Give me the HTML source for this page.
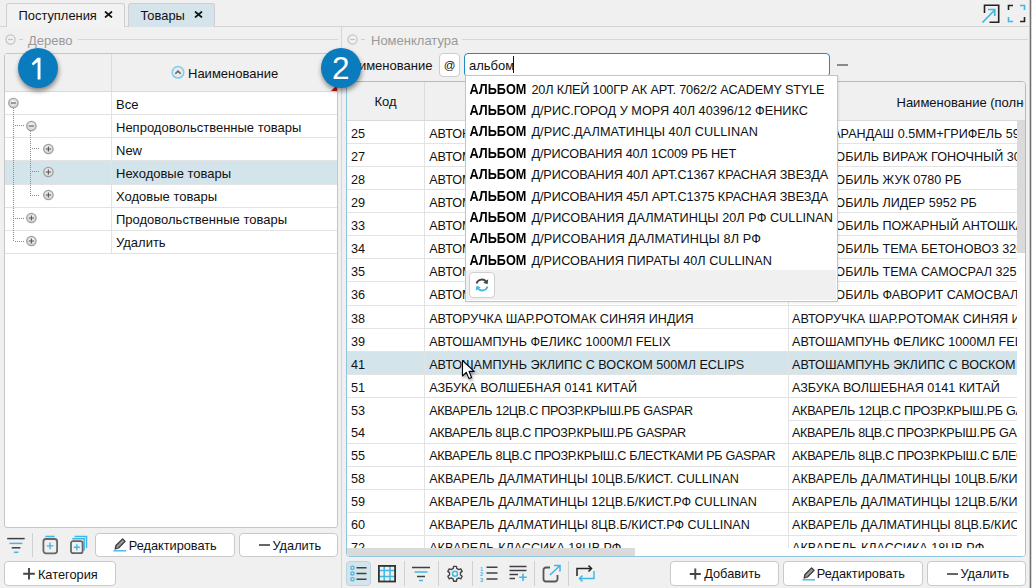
<!DOCTYPE html><html><head><meta charset="utf-8"><style>
html,body{margin:0;padding:0;}
body{width:1032px;height:588px;overflow:hidden;position:relative;background:#f0f0f0;font-family:"Liberation Sans",sans-serif;}
.t{position:absolute;line-height:1;white-space:nowrap;}
.b{position:absolute;box-sizing:border-box;}
.clip{position:absolute;overflow:hidden;}
</style></head><body>
<div class="b" style="left:0px;top:26px;width:1032px;height:1px;background:#d4d4d4;"></div>
<div class="b" style="left:6px;top:3px;width:119px;height:24px;border:1px solid #cfcfcf;border-bottom:none;border-radius:3px 3px 0 0;background:#f2f2f2;"></div>
<div class="t" style="left:18.5px;top:9.88px;font-size:12.9px;color:#111;font-weight:normal;">Поступления</div>
<svg class="b" style="left:104px;top:11px;" width="9" height="7" viewBox="0 0 9 7"><path d="M1 0.5L8 6.5M8 0.5L1 6.5" stroke="#111" stroke-width="1.7"/></svg>
<div class="b" style="left:128px;top:3px;width:87px;height:24px;border:1px solid #cfcfcf;border-bottom:none;border-radius:3px 3px 0 0;background:#d4e4ea;"></div>
<div class="t" style="left:140.5px;top:9.88px;font-size:12.9px;color:#111;font-weight:normal;">Товары</div>
<svg class="b" style="left:194px;top:11px;" width="9" height="7" viewBox="0 0 9 7"><path d="M1 0.5L8 6.5M8 0.5L1 6.5" stroke="#111" stroke-width="1.7"/></svg>
<svg class="b" style="left:980px;top:3px;" width="22" height="22" viewBox="0 0 22 22"><path d="M4.5 10V2.3H18.7V19.2H9.5" fill="none" stroke="#222" stroke-width="1.6"/><path d="M2.5 19.5L14.6 7.2M8 6.5H14.8V13" fill="none" stroke="#3fb8e8" stroke-width="1.7"/></svg>
<svg class="b" style="left:1007px;top:4px;" width="20" height="20" viewBox="0 0 20 20"><path d="M1.5 6V1.5H6" fill="none" stroke="#222" stroke-width="1.6"/><path d="M13 1.5H17.5V6" fill="none" stroke="#3fb8e8" stroke-width="1.6"/><path d="M1.5 13V17.5H6" fill="none" stroke="#3fb8e8" stroke-width="1.6"/><path d="M13 17.5H17.5V13" fill="none" stroke="#222" stroke-width="1.6"/></svg>
<div class="b" style="left:1029px;top:0px;width:1px;height:588px;background:#c8c8c8;"></div>
<div class="b" style="left:1030px;top:0px;width:1px;height:588px;background:#707070;"></div>
<div class="b" style="left:1031px;top:0px;width:1px;height:588px;background:#d8d8d8;"></div>
<svg class="b" style="left:4.5px;top:34px;" width="12" height="12" viewBox="0 0 12 12"><circle cx="5.5" cy="5.5" r="4.6" fill="none" stroke="#c4c4c4" stroke-width="1.2"/><path d="M3 5.5H8" stroke="#c4c4c4" stroke-width="1.2"/></svg>
<div class="b" style="left:18.5px;top:39px;width:4.0px;height:1px;background:#d0d0d0;"></div>
<div class="t" style="left:28px;top:33.80px;font-size:13px;color:#9a9a9a;font-weight:normal;">Дерево</div>
<div class="b" style="left:78px;top:39px;width:260px;height:1px;background:#d6d6d6;"></div>
<div class="b" style="left:341px;top:27px;width:1px;height:561px;background:#d6d6d6;"></div>
<div class="b" style="left:4px;top:53px;width:334px;height:475px;border:1px solid #c6c6c6;border-radius:3px;background:#fff;"></div>
<div class="b" style="left:5px;top:54px;width:332px;height:37px;background:#f0f0f0;"></div>
<div class="b" style="left:5px;top:91px;width:332px;height:1px;background:#d8d8d8;"></div>
<div class="b" style="left:111px;top:54px;width:1px;height:37px;background:#dcdcdc;"></div>
<svg class="b" style="left:171px;top:65px;" width="15" height="15" viewBox="0 0 15 15"><circle cx="7" cy="7.3" r="5.8" fill="#eaeaea" stroke="#7fcdef" stroke-width="1.5"/><path d="M4.3 8.8L7 6.1L9.7 8.8" fill="none" stroke="#666" stroke-width="1.6"/></svg>
<div class="t" style="left:188px;top:67.00px;font-size:13px;color:#111;font-weight:normal;">Наименование</div>
<svg class="b" style="left:331px;top:85px;" width="6" height="6" viewBox="0 0 6 6"><path d="M6 0V6H0Z" fill="#cc1111"/></svg>
<div class="b" style="left:5px;top:114px;width:332px;height:1px;background:#e3e3e3;"></div>
<div class="t" style="left:116px;top:98.10px;font-size:13px;color:#111;font-weight:normal;">Все</div>
<div class="b" style="left:5px;top:137px;width:332px;height:1px;background:#e3e3e3;"></div>
<div class="t" style="left:116px;top:121.10px;font-size:13px;color:#111;font-weight:normal;">Непродовольственные товары</div>
<div class="b" style="left:5px;top:160px;width:332px;height:1px;background:#e3e3e3;"></div>
<div class="t" style="left:116px;top:144.10px;font-size:13px;color:#111;font-weight:normal;">New</div>
<div class="b" style="left:5px;top:161px;width:332px;height:23px;background:#d3e4ea;"></div>
<div class="b" style="left:5px;top:184px;width:332px;height:1px;background:#e3e3e3;"></div>
<div class="t" style="left:116px;top:167.10px;font-size:13px;color:#111;font-weight:normal;">Неходовые товары</div>
<div class="b" style="left:5px;top:207px;width:332px;height:1px;background:#e3e3e3;"></div>
<div class="t" style="left:116px;top:190.10px;font-size:13px;color:#111;font-weight:normal;">Ходовые товары</div>
<div class="b" style="left:5px;top:230px;width:332px;height:1px;background:#e3e3e3;"></div>
<div class="t" style="left:116px;top:213.10px;font-size:13px;color:#111;font-weight:normal;">Продовольственные товары</div>
<div class="b" style="left:5px;top:253px;width:332px;height:1px;background:#e3e3e3;"></div>
<div class="t" style="left:116px;top:236.10px;font-size:13px;color:#111;font-weight:normal;">Удалить</div>
<div class="b" style="left:111px;top:92px;width:1px;height:161px;background:#e3e3e3;"></div>
<div class="b" style="left:13px;top:108px;width:1px;height:134px;background:repeating-linear-gradient(to bottom,#8a8a8a 0 1px,transparent 1px 2px);"></div>
<div class="b" style="left:15px;top:125px;width:9px;height:1px;background:repeating-linear-gradient(to right,#8a8a8a 0 1px,transparent 1px 2px);"></div>
<div class="b" style="left:30px;top:131px;width:1px;height:65px;background:repeating-linear-gradient(to bottom,#8a8a8a 0 1px,transparent 1px 2px);"></div>
<div class="b" style="left:32px;top:148px;width:8px;height:1px;background:repeating-linear-gradient(to right,#8a8a8a 0 1px,transparent 1px 2px);"></div>
<div class="b" style="left:32px;top:171px;width:8px;height:1px;background:repeating-linear-gradient(to right,#8a8a8a 0 1px,transparent 1px 2px);"></div>
<div class="b" style="left:32px;top:195px;width:8px;height:1px;background:repeating-linear-gradient(to right,#8a8a8a 0 1px,transparent 1px 2px);"></div>
<div class="b" style="left:15px;top:218px;width:9px;height:1px;background:repeating-linear-gradient(to right,#8a8a8a 0 1px,transparent 1px 2px);"></div>
<div class="b" style="left:15px;top:241px;width:9px;height:1px;background:repeating-linear-gradient(to right,#8a8a8a 0 1px,transparent 1px 2px);"></div>
<svg class="b" style="left:7px;top:97px;" width="12" height="12" viewBox="0 0 12 12"><defs><radialGradient id="g13103" cx="50%" cy="40%" r="60%"><stop offset="0" stop-color="#f4f4f4"/><stop offset="1" stop-color="#cfcfcf"/></radialGradient></defs><circle cx="6.4" cy="6" r="4.7" fill="url(#g13103)" stroke="#a0a0a0" stroke-width="1.3"/><path d="M3.9 6H8.9" stroke="#5a5a5a" stroke-width="1.1"/></svg>
<svg class="b" style="left:24.5px;top:120px;" width="12" height="12" viewBox="0 0 12 12"><defs><radialGradient id="g30126" cx="50%" cy="40%" r="60%"><stop offset="0" stop-color="#f4f4f4"/><stop offset="1" stop-color="#cfcfcf"/></radialGradient></defs><circle cx="6.4" cy="6" r="4.7" fill="url(#g30126)" stroke="#a0a0a0" stroke-width="1.3"/><path d="M3.9 6H8.9" stroke="#5a5a5a" stroke-width="1.1"/></svg>
<svg class="b" style="left:42px;top:143px;" width="12" height="12" viewBox="0 0 12 12"><defs><radialGradient id="g48149" cx="50%" cy="40%" r="60%"><stop offset="0" stop-color="#f4f4f4"/><stop offset="1" stop-color="#cfcfcf"/></radialGradient></defs><circle cx="6.4" cy="6" r="4.7" fill="url(#g48149)" stroke="#a0a0a0" stroke-width="1.3"/><path d="M3.9 6H8.9" stroke="#5a5a5a" stroke-width="1.1"/><path d="M6.4 3.5V8.5" stroke="#5a5a5a" stroke-width="1.1"/></svg>
<svg class="b" style="left:42px;top:166px;" width="12" height="12" viewBox="0 0 12 12"><defs><radialGradient id="g48172" cx="50%" cy="40%" r="60%"><stop offset="0" stop-color="#f4f4f4"/><stop offset="1" stop-color="#cfcfcf"/></radialGradient></defs><circle cx="6.4" cy="6" r="4.7" fill="url(#g48172)" stroke="#a0a0a0" stroke-width="1.3"/><path d="M3.9 6H8.9" stroke="#5a5a5a" stroke-width="1.1"/><path d="M6.4 3.5V8.5" stroke="#5a5a5a" stroke-width="1.1"/></svg>
<svg class="b" style="left:42px;top:189px;" width="12" height="12" viewBox="0 0 12 12"><defs><radialGradient id="g48195" cx="50%" cy="40%" r="60%"><stop offset="0" stop-color="#f4f4f4"/><stop offset="1" stop-color="#cfcfcf"/></radialGradient></defs><circle cx="6.4" cy="6" r="4.7" fill="url(#g48195)" stroke="#a0a0a0" stroke-width="1.3"/><path d="M3.9 6H8.9" stroke="#5a5a5a" stroke-width="1.1"/><path d="M6.4 3.5V8.5" stroke="#5a5a5a" stroke-width="1.1"/></svg>
<svg class="b" style="left:24.5px;top:212px;" width="12" height="12" viewBox="0 0 12 12"><defs><radialGradient id="g30218" cx="50%" cy="40%" r="60%"><stop offset="0" stop-color="#f4f4f4"/><stop offset="1" stop-color="#cfcfcf"/></radialGradient></defs><circle cx="6.4" cy="6" r="4.7" fill="url(#g30218)" stroke="#a0a0a0" stroke-width="1.3"/><path d="M3.9 6H8.9" stroke="#5a5a5a" stroke-width="1.1"/><path d="M6.4 3.5V8.5" stroke="#5a5a5a" stroke-width="1.1"/></svg>
<svg class="b" style="left:24.5px;top:235px;" width="12" height="12" viewBox="0 0 12 12"><defs><radialGradient id="g30241" cx="50%" cy="40%" r="60%"><stop offset="0" stop-color="#f4f4f4"/><stop offset="1" stop-color="#cfcfcf"/></radialGradient></defs><circle cx="6.4" cy="6" r="4.7" fill="url(#g30241)" stroke="#a0a0a0" stroke-width="1.3"/><path d="M3.9 6H8.9" stroke="#5a5a5a" stroke-width="1.1"/><path d="M6.4 3.5V8.5" stroke="#5a5a5a" stroke-width="1.1"/></svg>
<svg class="b" style="left:6px;top:536px;" width="20" height="18" viewBox="0 0 20 18"><path d="M1.2 2.6H18.7" stroke="#404040" stroke-width="1.5"/><path d="M3.5 7.4H16.4" stroke="#3fb8e8" stroke-width="1.5"/><path d="M5.7 11.8H14.4" stroke="#404040" stroke-width="1.5"/><path d="M7.9 16.3H12.4" stroke="#3fb8e8" stroke-width="1.5"/></svg>
<div class="b" style="left:32px;top:533px;width:1px;height:24px;background:#d0d0d0;"></div>
<svg class="b" style="left:41px;top:534px;" width="18" height="21" viewBox="0 0 18 21"><path d="M4.3 2.5H13.6" stroke="#3fb8e8" stroke-width="1.6"/><rect x="2.4" y="5" width="13.7" height="14.3" rx="2.5" fill="none" stroke="#666" stroke-width="1.8"/><path d="M9 8.6V15.2M5.7 11.9H12.3" stroke="#3fb8e8" stroke-width="1.4"/></svg>
<svg class="b" style="left:68px;top:534px;" width="22" height="21" viewBox="0 0 22 21"><path d="M6.5 2.5H18.5V14" fill="none" stroke="#3fb8e8" stroke-width="1.5"/><path d="M4.3 4.7H16.2V16.5" fill="none" stroke="#3fb8e8" stroke-width="1.5"/><rect x="3" y="7.2" width="11.6" height="12" rx="2" fill="#f0f0f0" stroke="#666" stroke-width="1.8"/><path d="M8.8 10.2V16.2M5.8 13.2H11.8" stroke="#3fb8e8" stroke-width="1.4"/></svg>
<div class="b" style="left:95px;top:533px;width:140px;height:24px;border:1px solid #c9c9c9;border-radius:4px;background:#fff;"></div>
<svg class="b" style="left:113px;top:537px;" width="14" height="15" viewBox="0 0 14 15"><path d="M2.2 12L3 8.5L9.6 1.9L12.1 4.4L5.5 11Z" fill="#9a9a9a" stroke="#3a3a3a" stroke-width="1.3" stroke-linejoin="round"/><path d="M0.5 13.8H13" stroke="#3fb8e8" stroke-width="1.4"/></svg>
<div class="t" style="left:128.7px;top:540.01px;font-size:12.75px;color:#111;font-weight:normal;">Редактировать</div>
<div class="b" style="left:239px;top:533px;width:99px;height:24px;border:1px solid #c9c9c9;border-radius:4px;background:#fff;"></div>
<div class="b" style="left:259px;top:544px;width:11px;height:2px;background:#666;"></div>
<div class="t" style="left:272.5px;top:540.01px;font-size:12.75px;color:#111;font-weight:normal;">Удалить</div>
<div class="b" style="left:4px;top:561px;width:112px;height:25px;border:1px solid #c9c9c9;border-radius:4px;background:#fff;"></div>
<svg class="b" style="left:22px;top:567px;" width="14" height="14" viewBox="0 0 14 14"><path d="M7 1V12.5M1.2 6.8H12.8" stroke="#444" stroke-width="1.9"/></svg>
<div class="t" style="left:37.9px;top:568.66px;font-size:12.8px;color:#111;font-weight:normal;">Категория</div>
<svg class="b" style="left:346.5px;top:34px;" width="12" height="12" viewBox="0 0 12 12"><circle cx="5.5" cy="5.5" r="4.6" fill="none" stroke="#c4c4c4" stroke-width="1.2"/><path d="M3 5.5H8" stroke="#c4c4c4" stroke-width="1.2"/></svg>
<div class="b" style="left:360.5px;top:39px;width:4.0px;height:1px;background:#d0d0d0;"></div>
<div class="t" style="left:371px;top:33.80px;font-size:13px;color:#9a9a9a;font-weight:normal;">Номенклатура</div>
<div class="b" style="left:462px;top:39px;width:566px;height:1px;background:#d6d6d6;"></div>
<div class="t" style="left:342.3px;top:58.60px;font-size:13px;color:#111;font-weight:normal;">Наименование</div>
<div class="b" style="left:439px;top:53px;width:21px;height:24px;border:1px solid #cdcdcd;border-radius:4px;background:#fff;"></div>
<div class="t" style="left:443.8px;top:59.57px;font-size:11.5px;color:#111;font-weight:normal;">@</div>
<div class="b" style="left:464px;top:53px;width:366px;height:24px;border:1px solid #1b8cc8;border-radius:4px;background:#fff;"></div>
<div class="t" style="left:469px;top:58.90px;font-size:13px;color:#111;font-weight:normal;">альбом</div>
<div class="b" style="left:513px;top:56px;width:1px;height:17px;background:#111;"></div>
<div class="b" style="left:837px;top:63.5px;width:11px;height:2.0px;background:#8a8a8a;"></div>
<div class="b" style="left:346px;top:81px;width:680px;height:476px;border:1px solid #8fc6de;border-radius:4px;background:#fff;"></div>
<div class="b" style="left:347px;top:82px;width:678px;height:38px;background:#f0f0f0;border-radius:3px 3px 0 0;"></div>
<div class="b" style="left:347px;top:120px;width:678px;height:1px;background:#dadada;"></div>
<div class="b" style="left:424px;top:82px;width:1px;height:38px;background:#dcdcdc;"></div>
<div class="b" style="left:788px;top:82px;width:1px;height:38px;background:#dcdcdc;"></div>
<div class="t" style="left:374.5px;top:94.80px;font-size:13px;color:#111;font-weight:normal;">Код</div>
<div class="t" style="left:560px;top:95.80px;font-size:13px;color:#111;font-weight:normal;">Наименование</div>
<div class="clip" style="left:789px;top:82px;width:235px;height:38px;"><div class="t" style="left:107.5px;top:13.80px;font-size:13px;color:#111;font-weight:normal;">Наименование (полное)</div>
</div><div class="clip" style="left:347px;top:121px;width:678px;height:427px;">
<div class="b" style="left:0px;top:22px;width:670px;height:1px;background:#e3e3e3;"></div>
<div class="t" style="left:4px;top:6.95px;font-size:12.7px;color:#111;font-weight:normal;">25</div>
<div class="clip" style="left:78px;top:0px;width:363px;height:22px;"><div class="t" style="left:4.2px;top:7.03px;font-size:12.6px;color:#111;font-weight:normal;">АВТОКАРАНДАШ 0.5ММ+ГРИФЕЛЬ 5952 РБ</div>
</div>
<div class="clip" style="left:442px;top:0px;width:228px;height:22px;"><div class="t" style="left:3px;top:7.03px;font-size:12.6px;color:#111;font-weight:normal;">АВТОКАРАНДАШ 0.5ММ+ГРИФЕЛЬ 5952 РБ</div>
</div>
<div class="b" style="left:0px;top:45px;width:670px;height:1px;background:#e3e3e3;"></div>
<div class="t" style="left:4px;top:29.95px;font-size:12.7px;color:#111;font-weight:normal;">27</div>
<div class="clip" style="left:78px;top:23px;width:363px;height:22px;"><div class="t" style="left:4.2px;top:7.03px;font-size:12.6px;color:#111;font-weight:normal;">АВТОМОБИЛЬ ВИРАЖ ГОНОЧНЫЙ 3045 РБ</div>
</div>
<div class="clip" style="left:442px;top:23px;width:228px;height:22px;"><div class="t" style="left:3px;top:7.03px;font-size:12.6px;color:#111;font-weight:normal;">АВТОМОБИЛЬ ВИРАЖ ГОНОЧНЫЙ 3045 РБ</div>
</div>
<div class="b" style="left:0px;top:68px;width:670px;height:1px;background:#e3e3e3;"></div>
<div class="t" style="left:4px;top:52.95px;font-size:12.7px;color:#111;font-weight:normal;">28</div>
<div class="clip" style="left:78px;top:46px;width:363px;height:22px;"><div class="t" style="left:4.2px;top:7.03px;font-size:12.6px;color:#111;font-weight:normal;">АВТОМОБИЛЬ ЖУК 0780 РБ</div>
</div>
<div class="clip" style="left:442px;top:46px;width:228px;height:22px;"><div class="t" style="left:3px;top:7.03px;font-size:12.6px;color:#111;font-weight:normal;">АВТОМОБИЛЬ ЖУК 0780 РБ</div>
</div>
<div class="b" style="left:0px;top:91px;width:670px;height:1px;background:#e3e3e3;"></div>
<div class="t" style="left:4px;top:75.95px;font-size:12.7px;color:#111;font-weight:normal;">29</div>
<div class="clip" style="left:78px;top:69px;width:363px;height:22px;"><div class="t" style="left:4.2px;top:7.03px;font-size:12.6px;color:#111;font-weight:normal;">АВТОМОБИЛЬ ЛИДЕР 5952 РБ</div>
</div>
<div class="clip" style="left:442px;top:69px;width:228px;height:22px;"><div class="t" style="left:3px;top:7.03px;font-size:12.6px;color:#111;font-weight:normal;">АВТОМОБИЛЬ ЛИДЕР 5952 РБ</div>
</div>
<div class="b" style="left:0px;top:114px;width:670px;height:1px;background:#e3e3e3;"></div>
<div class="t" style="left:4px;top:98.95px;font-size:12.7px;color:#111;font-weight:normal;">33</div>
<div class="clip" style="left:78px;top:92px;width:363px;height:22px;"><div class="t" style="left:4.2px;top:7.03px;font-size:12.6px;color:#111;font-weight:normal;">АВТОМОБИЛЬ ПОЖАРНЫЙ АНТОШКА</div>
</div>
<div class="clip" style="left:442px;top:92px;width:228px;height:22px;"><div class="t" style="left:3px;top:7.03px;font-size:12.6px;color:#111;font-weight:normal;">АВТОМОБИЛЬ ПОЖАРНЫЙ АНТОШКА</div>
</div>
<div class="b" style="left:0px;top:137px;width:670px;height:1px;background:#e3e3e3;"></div>
<div class="t" style="left:4px;top:121.95px;font-size:12.7px;color:#111;font-weight:normal;">34</div>
<div class="clip" style="left:78px;top:115px;width:363px;height:22px;"><div class="t" style="left:4.2px;top:7.03px;font-size:12.6px;color:#111;font-weight:normal;">АВТОМОБИЛЬ ТЕМА БЕТОНОВОЗ 326</div>
</div>
<div class="clip" style="left:442px;top:115px;width:228px;height:22px;"><div class="t" style="left:3px;top:7.03px;font-size:12.6px;color:#111;font-weight:normal;">АВТОМОБИЛЬ ТЕМА БЕТОНОВОЗ 326</div>
</div>
<div class="b" style="left:0px;top:160px;width:670px;height:1px;background:#e3e3e3;"></div>
<div class="t" style="left:4px;top:144.95px;font-size:12.7px;color:#111;font-weight:normal;">35</div>
<div class="clip" style="left:78px;top:138px;width:363px;height:22px;"><div class="t" style="left:4.2px;top:7.03px;font-size:12.6px;color:#111;font-weight:normal;">АВТОМОБИЛЬ ТЕМА САМОСРАЛ 325</div>
</div>
<div class="clip" style="left:442px;top:138px;width:228px;height:22px;"><div class="t" style="left:3px;top:7.03px;font-size:12.6px;color:#111;font-weight:normal;">АВТОМОБИЛЬ ТЕМА САМОСРАЛ 325</div>
</div>
<div class="b" style="left:0px;top:184px;width:670px;height:1px;background:#e3e3e3;"></div>
<div class="t" style="left:4px;top:167.95px;font-size:12.7px;color:#111;font-weight:normal;">36</div>
<div class="clip" style="left:78px;top:161px;width:363px;height:23px;"><div class="t" style="left:4.2px;top:7.03px;font-size:12.6px;color:#111;font-weight:normal;">АВТОМОБИЛЬ ФАВОРИТ САМОСВАЛ</div>
</div>
<div class="clip" style="left:442px;top:161px;width:228px;height:23px;"><div class="t" style="left:3px;top:7.03px;font-size:12.6px;color:#111;font-weight:normal;">АВТОМОБИЛЬ ФАВОРИТ САМОСВАЛ</div>
</div>
<div class="b" style="left:0px;top:207px;width:670px;height:1px;background:#e3e3e3;"></div>
<div class="t" style="left:4px;top:191.95px;font-size:12.7px;color:#111;font-weight:normal;">38</div>
<div class="clip" style="left:78px;top:185px;width:363px;height:22px;"><div class="t" style="left:4.2px;top:7.03px;font-size:12.6px;color:#111;font-weight:normal;">АВТОРУЧКА ШАР.РОТОМАК СИНЯЯ ИНДИЯ</div>
</div>
<div class="clip" style="left:442px;top:185px;width:228px;height:22px;"><div class="t" style="left:3px;top:7.03px;font-size:12.6px;color:#111;font-weight:normal;">АВТОРУЧКА ШАР.РОТОМАК СИНЯЯ ИНДИЯ</div>
</div>
<div class="b" style="left:0px;top:230px;width:670px;height:1px;background:#e3e3e3;"></div>
<div class="t" style="left:4px;top:214.95px;font-size:12.7px;color:#111;font-weight:normal;">39</div>
<div class="clip" style="left:78px;top:208px;width:363px;height:22px;"><div class="t" style="left:4.2px;top:7.03px;font-size:12.6px;color:#111;font-weight:normal;">АВТОШАМПУНЬ ФЕЛИКС 1000МЛ FELIX</div>
</div>
<div class="clip" style="left:442px;top:208px;width:228px;height:22px;"><div class="t" style="left:3px;top:7.03px;font-size:12.6px;color:#111;font-weight:normal;">АВТОШАМПУНЬ ФЕЛИКС 1000МЛ FELIX</div>
</div>
<div class="b" style="left:0px;top:231px;width:670px;height:22px;background:#d3e4ea;"></div>
<div class="b" style="left:0px;top:253px;width:670px;height:1px;background:#e3e3e3;"></div>
<div class="t" style="left:4px;top:237.95px;font-size:12.7px;color:#111;font-weight:normal;">41</div>
<div class="clip" style="left:78px;top:231px;width:363px;height:22px;"><div class="t" style="left:4.2px;top:7.03px;font-size:12.6px;color:#111;font-weight:normal;">АВТОШАМПУНЬ ЭКЛИПС С ВОСКОМ 500МЛ ECLIPS</div>
</div>
<div class="clip" style="left:442px;top:231px;width:228px;height:22px;"><div class="t" style="left:3px;top:7.03px;font-size:12.6px;color:#111;font-weight:normal;">АВТОШАМПУНЬ ЭКЛИПС С ВОСКОМ 500МЛ ECLIPS</div>
</div>
<div class="b" style="left:0px;top:276px;width:670px;height:1px;background:#e3e3e3;"></div>
<div class="t" style="left:4px;top:260.95px;font-size:12.7px;color:#111;font-weight:normal;">51</div>
<div class="clip" style="left:78px;top:254px;width:363px;height:22px;"><div class="t" style="left:4.2px;top:7.03px;font-size:12.6px;color:#111;font-weight:normal;">АЗБУКА ВОЛШЕБНАЯ 0141 КИТАЙ</div>
</div>
<div class="clip" style="left:442px;top:254px;width:228px;height:22px;"><div class="t" style="left:3px;top:7.03px;font-size:12.6px;color:#111;font-weight:normal;">АЗБУКА ВОЛШЕБНАЯ 0141 КИТАЙ</div>
</div>
<div class="b" style="left:442px;top:299px;width:228px;height:1px;background:#e3e3e3;"></div>
<div class="t" style="left:4px;top:283.95px;font-size:12.7px;color:#111;font-weight:normal;">53</div>
<div class="clip" style="left:78px;top:277px;width:363px;height:22px;"><div class="t" style="left:4.2px;top:7.03px;font-size:12.6px;color:#111;font-weight:normal;letter-spacing:-0.3px;">АКВАРЕЛЬ 12ЦВ.С ПРОЗР.КРЫШ.РБ GASPAR</div>
</div>
<div class="clip" style="left:442px;top:277px;width:228px;height:22px;"><div class="t" style="left:3px;top:7.03px;font-size:12.6px;color:#111;font-weight:normal;letter-spacing:-0.3px;">АКВАРЕЛЬ 12ЦВ.С ПРОЗР.КРЫШ.РБ GASPAR</div>
</div>
<div class="b" style="left:0px;top:322px;width:670px;height:1px;background:#e3e3e3;"></div>
<div class="t" style="left:4px;top:305.95px;font-size:12.7px;color:#111;font-weight:normal;">54</div>
<div class="clip" style="left:78px;top:300px;width:363px;height:22px;"><div class="t" style="left:4.2px;top:6.03px;font-size:12.6px;color:#111;font-weight:normal;letter-spacing:-0.31px;">АКВАРЕЛЬ 8ЦВ.С ПРОЗР.КРЫШ.РБ GASPAR</div>
</div>
<div class="clip" style="left:442px;top:300px;width:228px;height:22px;"><div class="t" style="left:3px;top:6.03px;font-size:12.6px;color:#111;font-weight:normal;letter-spacing:-0.31px;">АКВАРЕЛЬ 8ЦВ.С ПРОЗР.КРЫШ.РБ GASPAR</div>
</div>
<div class="b" style="left:0px;top:345px;width:670px;height:1px;background:#e3e3e3;"></div>
<div class="t" style="left:4px;top:328.95px;font-size:12.7px;color:#111;font-weight:normal;">55</div>
<div class="clip" style="left:78px;top:323px;width:363px;height:22px;"><div class="t" style="left:4.2px;top:6.03px;font-size:12.6px;color:#111;font-weight:normal;letter-spacing:-0.3px;">АКВАРЕЛЬ 8ЦВ.С ПРОЗР.КРЫШ.С БЛЕСТКАМИ РБ GASPAR</div>
</div>
<div class="clip" style="left:442px;top:323px;width:228px;height:22px;"><div class="t" style="left:3px;top:6.03px;font-size:12.6px;color:#111;font-weight:normal;letter-spacing:-0.3px;">АКВАРЕЛЬ 8ЦВ.С ПРОЗР.КРЫШ.С БЛЕСТКАМИ РБ GASPAR</div>
</div>
<div class="b" style="left:0px;top:368px;width:670px;height:1px;background:#e3e3e3;"></div>
<div class="t" style="left:4px;top:351.95px;font-size:12.7px;color:#111;font-weight:normal;">58</div>
<div class="clip" style="left:78px;top:346px;width:363px;height:22px;"><div class="t" style="left:4.2px;top:6.03px;font-size:12.6px;color:#111;font-weight:normal;">АКВАРЕЛЬ ДАЛМАТИНЦЫ 10ЦВ.Б/КИСТ. CULLINAN</div>
</div>
<div class="clip" style="left:442px;top:346px;width:228px;height:22px;"><div class="t" style="left:3px;top:6.03px;font-size:12.6px;color:#111;font-weight:normal;">АКВАРЕЛЬ ДАЛМАТИНЦЫ 10ЦВ.Б/КИСТ. CULLINAN</div>
</div>
<div class="b" style="left:0px;top:391px;width:670px;height:1px;background:#e3e3e3;"></div>
<div class="t" style="left:4px;top:374.95px;font-size:12.7px;color:#111;font-weight:normal;">59</div>
<div class="clip" style="left:78px;top:369px;width:363px;height:22px;"><div class="t" style="left:4.2px;top:6.03px;font-size:12.6px;color:#111;font-weight:normal;">АКВАРЕЛЬ ДАЛМАТИНЦЫ 12ЦВ.Б/КИСТ.РФ CULLINAN</div>
</div>
<div class="clip" style="left:442px;top:369px;width:228px;height:22px;"><div class="t" style="left:3px;top:6.03px;font-size:12.6px;color:#111;font-weight:normal;">АКВАРЕЛЬ ДАЛМАТИНЦЫ 12ЦВ.Б/КИСТ.РФ CULLINAN</div>
</div>
<div class="b" style="left:0px;top:414px;width:670px;height:1px;background:#e3e3e3;"></div>
<div class="t" style="left:4px;top:397.95px;font-size:12.7px;color:#111;font-weight:normal;">60</div>
<div class="clip" style="left:78px;top:392px;width:363px;height:22px;"><div class="t" style="left:4.2px;top:6.03px;font-size:12.6px;color:#111;font-weight:normal;">АКВАРЕЛЬ ДАЛМАТИНЦЫ 8ЦВ.Б/КИСТ.РФ CULLINAN</div>
</div>
<div class="clip" style="left:442px;top:392px;width:228px;height:22px;"><div class="t" style="left:3px;top:6.03px;font-size:12.6px;color:#111;font-weight:normal;">АКВАРЕЛЬ ДАЛМАТИНЦЫ 8ЦВ.Б/КИСТ.РФ CULLINAN</div>
</div>
<div class="b" style="left:0px;top:437px;width:670px;height:1px;background:#e3e3e3;"></div>
<div class="t" style="left:4px;top:420.95px;font-size:12.7px;color:#111;font-weight:normal;">72</div>
<div class="clip" style="left:78px;top:415px;width:363px;height:22px;"><div class="t" style="left:4.2px;top:6.03px;font-size:12.6px;color:#111;font-weight:normal;">АКВАРЕЛЬ КЛАССИКА 18ЦВ.РФ</div>
</div>
<div class="clip" style="left:442px;top:415px;width:228px;height:22px;"><div class="t" style="left:3px;top:6.03px;font-size:12.6px;color:#111;font-weight:normal;">АКВАРЕЛЬ КЛАССИКА 18ЦВ.РФ</div>
</div>
<div class="b" style="left:77px;top:0px;width:1px;height:427px;background:#e3e3e3;"></div>
<div class="b" style="left:441px;top:0px;width:1px;height:427px;background:#e3e3e3;"></div>
</div>
<div class="b" style="left:347px;top:548px;width:678px;height:8px;background:#fff;border-radius:0 0 3px 3px;"></div>
<div class="b" style="left:347px;top:548px;width:288px;height:8px;background:#dadada;border-radius:0 0 0 3px;"></div>
<div class="b" style="left:1017px;top:121px;width:8px;height:132px;background:#dadada;"></div>
<div class="b" style="left:465px;top:75px;width:373px;height:227px;border:1px solid #c4c4c4;background:#fff;box-shadow:1px 1px 2px rgba(0,0,0,0.08);"></div>
<div class="b" style="left:466px;top:270px;width:370px;height:30px;background:#f0f0f0;"></div>
<div class="t" style="left:469.5px;top:83.65px;font-size:12.7px;color:#111;"><b style="color:#000;display:inline-block;transform:scaleY(1.11);transform-origin:0 10.75px;margin-right:1.5px;">АЛЬБОМ</b> <span style="letter-spacing:-0.18px">20Л КЛЕЙ 100ГР АК АРТ. 7062/2 ACADEMY STYLE</span></div>
<div class="t" style="left:469.5px;top:105.02px;font-size:12.7px;color:#111;"><b style="color:#000;display:inline-block;transform:scaleY(1.11);transform-origin:0 10.75px;margin-right:1.5px;">АЛЬБОМ</b> <span style="letter-spacing:0.0px">Д/РИС.ГОРОД У МОРЯ 40Л 40396/12 ФЕНИКС</span></div>
<div class="t" style="left:469.5px;top:126.40px;font-size:12.7px;color:#111;"><b style="color:#000;display:inline-block;transform:scaleY(1.11);transform-origin:0 10.75px;margin-right:1.5px;">АЛЬБОМ</b> <span style="letter-spacing:0.05px">Д/РИС.ДАЛМАТИНЦЫ 40Л CULLINAN</span></div>
<div class="t" style="left:469.5px;top:147.77px;font-size:12.7px;color:#111;"><b style="color:#000;display:inline-block;transform:scaleY(1.11);transform-origin:0 10.75px;margin-right:1.5px;">АЛЬБОМ</b> <span style="letter-spacing:-0.14px">Д/РИСОВАНИЯ 40Л 1С009 РБ НЕТ</span></div>
<div class="t" style="left:469.5px;top:169.15px;font-size:12.7px;color:#111;"><b style="color:#000;display:inline-block;transform:scaleY(1.11);transform-origin:0 10.75px;margin-right:1.5px;">АЛЬБОМ</b> <span style="letter-spacing:-0.1px">Д/РИСОВАНИЯ 40Л АРТ.С1367 КРАСНАЯ ЗВЕЗДА</span></div>
<div class="t" style="left:469.5px;top:190.52px;font-size:12.7px;color:#111;"><b style="color:#000;display:inline-block;transform:scaleY(1.11);transform-origin:0 10.75px;margin-right:1.5px;">АЛЬБОМ</b> <span style="letter-spacing:-0.1px">Д/РИСОВАНИЯ 45Л АРТ.С1375 КРАСНАЯ ЗВЕЗДА</span></div>
<div class="t" style="left:469.5px;top:211.90px;font-size:12.7px;color:#111;"><b style="color:#000;display:inline-block;transform:scaleY(1.11);transform-origin:0 10.75px;margin-right:1.5px;">АЛЬБОМ</b> <span style="letter-spacing:0.04px">Д/РИСОВАНИЯ ДАЛМАТИНЦЫ 20Л РФ CULLINAN</span></div>
<div class="t" style="left:469.5px;top:233.27px;font-size:12.7px;color:#111;"><b style="color:#000;display:inline-block;transform:scaleY(1.11);transform-origin:0 10.75px;margin-right:1.5px;">АЛЬБОМ</b> <span style="letter-spacing:0.1px">Д/РИСОВАНИЯ ДАЛМАТИНЦЫ 8Л РФ</span></div>
<div class="t" style="left:469.5px;top:254.65px;font-size:12.7px;color:#111;"><b style="color:#000;display:inline-block;transform:scaleY(1.11);transform-origin:0 10.75px;margin-right:1.5px;">АЛЬБОМ</b> <span style="letter-spacing:0.0px">Д/РИСОВАНИЯ ПИРАТЫ 40Л CULLINAN</span></div>
<div class="b" style="left:469px;top:272px;width:26px;height:26px;border:1px solid #cfcfcf;border-radius:4px;background:#fff;"></div>
<svg class="b" style="left:473px;top:276px;" width="18" height="18" viewBox="0 0 18 18"><path d="M3.5 7.5A5.5 5.5 0 0 1 13.5 6.2" fill="none" stroke="#444" stroke-width="1.8"/><path d="M15.2 3.2L14.6 8.3L10.3 6.7Z" fill="#444"/><path d="M14.5 10.5A5.5 5.5 0 0 1 4.5 11.8" fill="none" stroke="#3fb8e8" stroke-width="1.8"/><path d="M2.8 14.8L3.4 9.7L7.7 11.3Z" fill="#3fb8e8"/></svg>
<div class="b" style="left:346px;top:561px;width:25px;height:25px;border:1px solid #bcd4dd;border-radius:4px;background:#d3e4ea;"></div>
<svg class="b" style="left:349px;top:564px;" width="20" height="19" viewBox="0 0 20 19"><circle cx="3.5" cy="3.8" r="1.7" fill="none" stroke="#3fb8e8" stroke-width="1.2"/><circle cx="3.5" cy="9.5" r="1.7" fill="none" stroke="#3fb8e8" stroke-width="1.2"/><circle cx="3.5" cy="15.2" r="1.7" fill="none" stroke="#3fb8e8" stroke-width="1.2"/><path d="M7.5 3.8H17.5M7.5 9.5H17.5M7.5 15.2H17.5" stroke="#404040" stroke-width="1.6"/></svg>
<svg class="b" style="left:377px;top:564px;" width="20" height="19" viewBox="0 0 20 19"><path d="M7.2 1.5V17.5M13 1.5V17.5M1.5 6.5H18.5M1.5 12.5H18.5" stroke="#3fb8e8" stroke-width="1.5"/><rect x="1.9" y="1.9" width="16.2" height="15.6" fill="none" stroke="#333" stroke-width="1.8"/></svg>
<div class="b" style="left:404px;top:561px;width:1px;height:25px;background:#d0d0d0;"></div>
<div class="b" style="left:438px;top:561px;width:1px;height:25px;background:#d0d0d0;"></div>
<div class="b" style="left:472px;top:561px;width:1px;height:25px;background:#d0d0d0;"></div>
<div class="b" style="left:534px;top:561px;width:1px;height:25px;background:#d0d0d0;"></div>
<div class="b" style="left:568px;top:561px;width:1px;height:25px;background:#d0d0d0;"></div>
<svg class="b" style="left:411px;top:565px;" width="20" height="17" viewBox="0 0 20 17"><path d="M1 2.5H19" stroke="#404040" stroke-width="1.5"/><path d="M3.5 7H16.5" stroke="#3fb8e8" stroke-width="1.5"/><path d="M6 11.5H14" stroke="#404040" stroke-width="1.5"/><path d="M8 15.5H12" stroke="#3fb8e8" stroke-width="1.5"/></svg>
<svg class="b" style="left:445px;top:564px;" width="20" height="20" viewBox="0 0 20 20"><path d="M8.27,4.47 L8.55,2.34 L11.45,2.34 L11.73,4.47 L13.75,5.64 L15.74,4.81 L17.19,7.33 L15.48,8.64 L15.48,10.96 L17.19,12.27 L15.74,14.79 L13.75,13.96 L11.73,15.13 L11.45,17.26 L8.55,17.26 L8.27,15.13 L6.25,13.96 L4.26,14.79 L2.81,12.27 L4.52,10.96 L4.52,8.64 L2.81,7.33 L4.26,4.81 L6.25,5.64Z" fill="none" stroke="#444" stroke-width="1.4" stroke-linejoin="round"/><circle cx="10" cy="9.8" r="2.5" fill="none" stroke="#3fb8e8" stroke-width="1.5"/></svg>
<svg class="b" style="left:480px;top:564px;" width="19" height="19" viewBox="0 0 19 19"><text x="0" y="6.5" font-size="5.5" font-family="Liberation Sans" font-weight="bold" fill="#3fb8e8">1</text><text x="0" y="12" font-size="5.5" font-family="Liberation Sans" font-weight="bold" fill="#3fb8e8">2</text><text x="0" y="17.5" font-size="5.5" font-family="Liberation Sans" font-weight="bold" fill="#3fb8e8">3</text><path d="M6.5 3.3H17.5M6.5 9H17.5M6.5 15H17.5" stroke="#404040" stroke-width="1.6"/></svg>
<svg class="b" style="left:508px;top:564px;" width="20" height="18" viewBox="0 0 20 18"><path d="M1.5 2.5H18.5M1.5 6.5H18.5M1.5 10.5H10M1.5 14.5H7" stroke="#404040" stroke-width="1.5"/><path d="M15 9.5V17M11.2 13.3H18.8" stroke="#3fb8e8" stroke-width="1.6"/></svg>
<svg class="b" style="left:542px;top:564px;" width="20" height="19" viewBox="0 0 20 19"><path d="M8 3.5H4A2.5 2.5 0 0 0 1.5 6V15A2.5 2.5 0 0 0 4 17.5H13A2.5 2.5 0 0 0 15.5 15V11" fill="none" stroke="#555" stroke-width="1.8"/><path d="M8 11L18 1.5M12 1.5H18V7.5" fill="none" stroke="#3fb8e8" stroke-width="1.6"/></svg>
<svg class="b" style="left:575px;top:564px;" width="21" height="19" viewBox="0 0 21 19"><path d="M2 12V4.5H16" fill="none" stroke="#222" stroke-width="1.5"/><path d="M13.5 1.5L16.5 4.5L13.5 7.5" fill="none" stroke="#222" stroke-width="1.5"/><path d="M19 7V14.5H5" fill="none" stroke="#3fb8e8" stroke-width="1.5"/><path d="M7.5 11.5L4.5 14.5L7.5 17.5" fill="none" stroke="#3fb8e8" stroke-width="1.5"/></svg>
<div class="b" style="left:670px;top:561px;width:109px;height:25px;border:1px solid #c9c9c9;border-radius:4px;background:#fff;"></div>
<svg class="b" style="left:689px;top:568px;" width="13" height="12" viewBox="0 0 13 12"><path d="M6.3 0.5V11.5M0.8 6H11.8" stroke="#444" stroke-width="1.9"/></svg>
<div class="t" style="left:704.2px;top:568.36px;font-size:12.8px;color:#111;font-weight:normal;">Добавить</div>
<div class="b" style="left:783px;top:561px;width:140px;height:25px;border:1px solid #c9c9c9;border-radius:4px;background:#fff;"></div>
<svg class="b" style="left:801.5px;top:565.5px;" width="14" height="15" viewBox="0 0 14 15"><path d="M2.2 12L3 8.5L9.6 1.9L12.1 4.4L5.5 11Z" fill="#9a9a9a" stroke="#3a3a3a" stroke-width="1.3" stroke-linejoin="round"/><path d="M0.5 13.8H13" stroke="#3fb8e8" stroke-width="1.4"/></svg>
<div class="t" style="left:816.8px;top:568.41px;font-size:12.75px;color:#111;font-weight:normal;">Редактировать</div>
<div class="b" style="left:927px;top:561px;width:99px;height:25px;border:1px solid #c9c9c9;border-radius:4px;background:#fff;"></div>
<div class="b" style="left:946.5px;top:572.5px;width:11.0px;height:2.0px;background:#666;"></div>
<div class="t" style="left:960.5px;top:568.41px;font-size:12.75px;color:#111;font-weight:normal;">Удалить</div>
<div class="b" style="left:18px;top:48px;width:40px;height:40px;border-radius:50%;background:#0a7bbd;box-shadow:0.5px 3px 5px rgba(0,0,0,0.45);"></div>
<svg class="b" style="left:18px;top:48px;" width="40" height="40" viewBox="0 0 40 40"><path d="M19.4 9.7H22.5V31.5H19.6V13.9L15.0 17.6L13.7 15.4Z" fill="#fff"/></svg>
<div class="b" style="left:320.7px;top:47.7px;width:40px;height:40px;border-radius:50%;background:#0a7bbd;box-shadow:0.5px 3px 5px rgba(0,0,0,0.45);"></div>
<div class="t" style="left:320.7px;width:40px;text-align:center;top:53.400000000000006px;font-size:31.5px;color:#fff;">2</div>
<svg class="b" style="left:461px;top:359px;filter:drop-shadow(1px 2px 1.5px rgba(0,0,0,0.35));" width="16" height="22" viewBox="0 0 16 22"><path d="M1.5 1.5V17L5.3 13.4L8 19.6L10.6 18.5L8 12.4H13.2Z" fill="#fff" stroke="#000" stroke-width="1.1" stroke-linejoin="round"/></svg>
</body></html>
